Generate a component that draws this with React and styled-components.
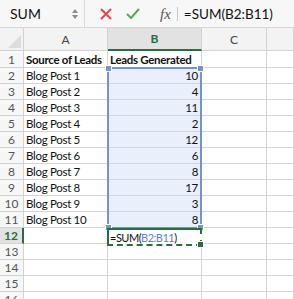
import styled, { createGlobalStyle } from 'styled-components';

const GlobalStyle = createGlobalStyle`
  html, body {
    margin: 0;
    padding: 0;
    background: #ffffff;
  }
`;

const Container = styled.div`
  width: 294px;
  height: 299px;
  overflow: hidden;
  background: #ffffff;
  font-family: Lato, 'Open Sans', sans-serif;
  color: #111;
`;

const Toolbar = styled.div`
  display: flex;
  align-items: center;
  height: 28px;
  background: #f7f7f7;
  border-bottom: 1px solid #d6d6d6;
  box-sizing: border-box;
`;

const NameBox = styled.div`
  display: flex;
  align-items: center;
  justify-content: space-between;
  width: 85px;
  height: 100%;
  padding: 0 4px 0 10px;
  box-sizing: border-box;
  border-right: 1px solid #dadada;
  font-size: 14px;
`;

const Stepper = styled.div`
  display: flex;
  flex-direction: column;
  gap: 2px;
  margin-right: 2px;
`;

const Arrow = styled.span`
  width: 0;
  height: 0;
  border-left: 3px solid transparent;
  border-right: 3px solid transparent;
  border-${p => (p.$down ? 'top' : 'bottom')}: 4px solid #8a8a8a;
`;

const IconGroup = styled.div`
  display: flex;
  align-items: center;
  gap: 14px;
  padding-left: 15px;
  width: 74px;
  box-sizing: border-box;
`;

const Fx = styled.span`
  font-family: 'Liberation Serif', serif;
  font-style: italic;
  font-size: 15px;
  color: #555;
  padding: 0 6px 0 1px;
  border-right: 1px solid #c8c8c8;
  line-height: 14px;
`;

const FormulaText = styled.span`
  padding-left: 6px;
  font-size: 13.5px;
  color: #111;
`;

const Grid = styled.div`
  display: grid;
  grid-template-columns: 24px 84px 94px 65px 27px;
  grid-template-rows: 23px 17px repeat(15, 16px);
`;

const Corner = styled.div`
  grid-row: 1;
  grid-column: 1;
  position: relative;
  background: #f3f3f3;
  border-right: 1px solid #d2d2d2;
  border-bottom: 1px solid #d2d2d2;
  box-sizing: border-box;

  &::after {
    content: '';
    position: absolute;
    right: 2px;
    bottom: 2px;
    border-left: 13px solid transparent;
    border-bottom: 13px solid #dcdcdc;
  }
`;

const ColHead = styled.div`
  grid-row: 1;
  grid-column: ${p => p.$col};
  display: flex;
  align-items: center;
  justify-content: center;
  font-size: 12px;
  color: ${p => (p.$active ? '#21733e' : '#444')};
  font-weight: ${p => (p.$active ? 700 : 400)};
  background: ${p => (p.$active ? '#e2e2e2' : '#f3f3f3')};
  border-right: 1px solid #d2d2d2;
  border-bottom: ${p => (p.$active ? '2px solid #2b6b3f' : '1px solid #d2d2d2')};
  box-sizing: border-box;
`;

const RowHead = styled.div`
  grid-row: ${p => p.$row};
  grid-column: 1;
  display: flex;
  align-items: center;
  justify-content: center;
  font-size: 12px;
  color: ${p => (p.$active ? '#21733e' : '#555')};
  font-weight: ${p => (p.$active ? 700 : 400)};
  background: ${p => (p.$active ? '#e2e2e2' : '#f6f6f6')};
  border-right: ${p => (p.$active ? '2px solid #2b6b3f' : '1px solid #d2d2d2')};
  border-bottom: 1px solid #d2d2d2;
  box-sizing: border-box;
`;

const Cell = styled.div`
  grid-row: ${p => p.$row};
  grid-column: ${p => p.$col};
  display: flex;
  align-items: flex-end;
  justify-content: ${p => (p.$num ? 'flex-end' : 'flex-start')};
  padding: 0 3px 0 2px;
  font-size: 11.5px;
  letter-spacing: -0.3px;
  line-height: 15px;
  font-weight: ${p => (p.$bold ? 700 : 400)};
  white-space: nowrap;
  background: ${p => (p.$picked ? '#e9effb' : '#ffffff')};
  border-right: 1px solid #d4d4d4;
  border-bottom: 1px solid #d4d4d4;
  box-sizing: border-box;
`;

const RangeBox = styled.div`
  grid-column: 3;
  grid-row: 3 / 13;
  position: relative;
  margin: -1px 0 -1px -1px;
  border: 2px solid #7393d4;
  pointer-events: none;
`;

const Handle = styled.span`
  position: absolute;
  width: 5px;
  height: 5px;
  background: #7393d4;
  border: 1px solid #fff;
  ${p => (p.$top ? 'top: -4px;' : 'bottom: -4px;')}
  ${p => (p.$left ? 'left: -4px;' : 'right: -4px;')}
`;

const EditCell = styled.div`
  grid-column: 3;
  grid-row: 13;
  position: relative;
  margin: 0 0 -2px -1px;
  display: flex;
  align-items: center;
  padding-left: 1px;
  font-size: 11px;
  letter-spacing: -0.5px;
  background: #fff;
  border: 2px solid #2b6b3f;
  border-bottom-style: dashed;
  border-right-style: dashed;
  white-space: nowrap;
`;

const Ref = styled.span`
  color: #5b7fd6;
`;

const GreenHandle = styled.span`
  position: absolute;
  right: -4px;
  bottom: -4px;
  width: 5px;
  height: 5px;
  background: #2b6b3f;
  border: 1px solid #fff;
`;

const rows = [
  ['Source of Leads', 'Leads Generated'],
  ['Blog Post 1', 10],
  ['Blog Post 2', 4],
  ['Blog Post 3', 11],
  ['Blog Post 4', 2],
  ['Blog Post 5', 12],
  ['Blog Post 6', 6],
  ['Blog Post 7', 8],
  ['Blog Post 8', 17],
  ['Blog Post 9', 3],
  ['Blog Post 10', 8],
  ['', ''],
  ['', ''],
  ['', ''],
  ['', ''],
  ['', ''],
];

const App = () => {
  return (
    <Container>
      <GlobalStyle />
      <Toolbar>
        <NameBox>
          SUM
          <Stepper>
            <Arrow />
            <Arrow $down />
          </Stepper>
        </NameBox>
        <IconGroup>
          <svg width="12" height="12" viewBox="0 0 12 12">
            <path d="M1.5 1.5 L10.5 10.5 M10.5 1.5 L1.5 10.5" stroke="#e0474c" strokeWidth="2" strokeLinecap="round" />
          </svg>
          <svg width="14" height="12" viewBox="0 0 14 12">
            <path d="M1.5 6.5 L5 10 L12.5 1.5" fill="none" stroke="#4fae50" strokeWidth="2" strokeLinecap="round" strokeLinejoin="round" />
          </svg>
        </IconGroup>
        <Fx>fx</Fx>
        <FormulaText>=SUM(B2:B11)</FormulaText>
      </Toolbar>

      <Grid>
        <Corner />
        <ColHead $col={2}>A</ColHead>
        <ColHead $col={3} $active>B</ColHead>
        <ColHead $col={4}>C</ColHead>
        <ColHead $col={5} />

        {rows.map((r, i) => {
          const n = i + 1;
          const row = n + 1;
          return [
            <RowHead key={`h${n}`} $row={row} $active={n === 12}>{n}</RowHead>,
            <Cell key={`a${n}`} $row={row} $col={2} $bold={n === 1}>{r[0]}</Cell>,
            <Cell key={`b${n}`} $row={row} $col={3} $bold={n === 1} $num={n > 1} $picked={n > 1 && n < 12}>
              {r[1]}
            </Cell>,
            <Cell key={`c${n}`} $row={row} $col={4} />,
            <Cell key={`d${n}`} $row={row} $col={5} />,
          ];
        })}

        <RangeBox>
          <Handle $top $left />
          <Handle $top />
          <Handle $left />
          <Handle />
        </RangeBox>
        <EditCell>
          =SUM(<Ref>B2:B11</Ref>)
          <GreenHandle />
        </EditCell>
      </Grid>
    </Container>
  );
};

export default App;
